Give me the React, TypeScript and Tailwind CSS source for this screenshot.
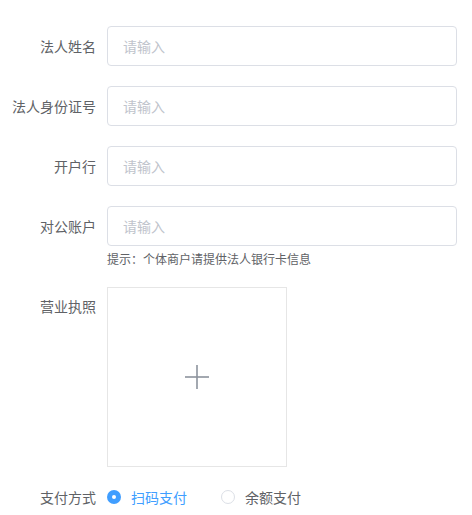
import React, { useState } from 'react';

const FONT = { fontFamily: '"Noto Sans CJK SC", "Noto Sans", sans-serif' };

function Field({ label }: { label: string }) {
  return (
    <div className="flex items-center mb-[20px]">
      <label className="w-[107px] shrink-0 pr-[11px] text-right text-[14px] leading-[40px] text-[#606266]">{label}</label>
      <input
        placeholder="请输入"
        className="h-[40px] w-[350px] rounded-[4px] border border-[#dcdfe6] bg-white px-[15px] text-[14px] text-[#606266] outline-none placeholder:text-[#c0c4cc]"
      />
    </div>
  );
}

export default function App() {
  const [pay, setPay] = useState<'scan' | 'balance'>('scan');

  return (
    <div className="w-[472px] h-[515px] bg-white pt-[26px]" style={FONT}>
      <Field label="法人姓名" />
      <Field label="法人身份证号" />
      <Field label="开户行" />

      {/* 对公账户 + hint */}
      <div className="flex">
        <label className="w-[107px] shrink-0 pr-[11px] text-right text-[14px] leading-[40px] text-[#606266]">对公账户</label>
        <div className="flex flex-col">
          <input
            placeholder="请输入"
            className="h-[40px] w-[350px] rounded-[4px] border border-[#dcdfe6] bg-white px-[15px] text-[14px] text-[#606266] outline-none placeholder:text-[#c0c4cc]"
          />
          <p className="mt-[4px] text-[12px] leading-[18px] text-[#606266]">提示：个体商户请提供法人银行卡信息</p>
        </div>
      </div>

      {/* 营业执照 */}
      <div className="flex mt-[19px]">
        <label className="w-[107px] shrink-0 pr-[11px] text-right text-[14px] leading-[39px] text-[#606266]">营业执照</label>
        <div className="flex h-[180px] w-[180px] items-center justify-center border border-[#e6e6e6] bg-white cursor-pointer">
          <svg width="24" height="24" viewBox="0 0 24 24" fill="none" stroke="#8c939d" strokeWidth="1.6">
            <line x1="12" y1="0" x2="12" y2="24" />
            <line x1="0" y1="12" x2="24" y2="12" />
          </svg>
        </div>
      </div>

      {/* 支付方式 */}
      <div className="flex items-center mt-[10px]">
        <label className="w-[107px] shrink-0 pr-[11px] text-right text-[14px] leading-[40px] text-[#606266]">支付方式</label>
        <div className="flex items-center">
          <button onClick={() => setPay('scan')} className="flex items-center mr-[34px]">
            {pay === 'scan' ? (
              <span className="flex h-[14px] w-[14px] items-center justify-center rounded-full bg-[#409eff]">
                <span className="h-[4px] w-[4px] rounded-full bg-white" />
              </span>
            ) : (
              <span className="h-[14px] w-[14px] rounded-full border border-[#dcdfe6] bg-white" />
            )}
            <span className={`ml-[10px] text-[14px] ${pay === 'scan' ? 'text-[#409eff]' : 'text-[#606266]'}`}>扫码支付</span>
          </button>
          <button onClick={() => setPay('balance')} className="flex items-center">
            {pay === 'balance' ? (
              <span className="flex h-[14px] w-[14px] items-center justify-center rounded-full bg-[#409eff]">
                <span className="h-[4px] w-[4px] rounded-full bg-white" />
              </span>
            ) : (
              <span className="h-[14px] w-[14px] rounded-full border border-[#dcdfe6] bg-white" />
            )}
            <span className={`ml-[10px] text-[14px] ${pay === 'balance' ? 'text-[#409eff]' : 'text-[#606266]'}`}>余额支付</span>
          </button>
        </div>
      </div>
    </div>
  );
}
